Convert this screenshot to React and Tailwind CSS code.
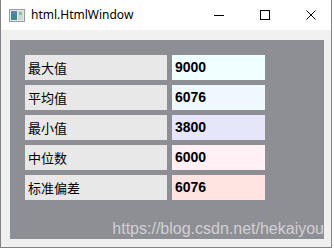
import React from "react";

const rows = [
  { label: "最大值", value: "9000", bg: "bg-[#f0ffff]" },
  { label: "平均值", value: "6076", bg: "bg-[#f0f8ff]" },
  { label: "最小值", value: "3800", bg: "bg-[#e6e6fa]" },
  { label: "中位数", value: "6000", bg: "bg-[#fff0f5]" },
  { label: "标准偏差", value: "6076", bg: "bg-[#ffe4e1]" },
];

const AppIcon = () => (
  <svg width="16" height="13" viewBox="0 0 16 13">
    <rect x="0.5" y="0.5" width="15" height="12" fill="#e8e8e8" stroke="#9a9a9a" />
    <rect x="2" y="2" width="6" height="9" fill="#3d8a8f" />
    <rect x="2" y="2" width="6" height="3" fill="#5f7fb8" />
    <rect x="9" y="2" width="5" height="9" fill="#cfd8d8" />
    <rect x="10" y="3" width="3" height="3" fill="#8fc0a0" />
  </svg>
);

const App = () => (
  <div className="w-[334px] h-[249px] bg-white">
    <div className="w-[332px] h-[248px] border-x border-b border-[#828282] flex flex-col">
      <div className="h-[30px] flex items-center bg-white shrink-0">
        <div className="ml-[8px] mr-[6px] flex items-center">
          <AppIcon />
        </div>
        <span className="text-[12px] text-black font-['Noto_Sans',sans-serif] leading-none">
          html.HtmlWindow
        </span>
        <div className="ml-auto mr-[-3px] flex items-center h-full">
          <div className="w-[46px] h-full flex items-center justify-center">
            <div className="w-[10px] h-px bg-black" />
          </div>
          <div className="w-[46px] h-full flex items-center justify-center">
            <div className="w-[10px] h-[10px] border border-black" />
          </div>
          <div className="w-[46px] h-full flex items-center justify-center">
            <svg width="10" height="10" viewBox="0 0 10 10">
              <path d="M0.5 0.5 L9.5 9.5 M9.5 0.5 L0.5 9.5" stroke="#000" strokeWidth="1" />
            </svg>
          </div>
        </div>
      </div>
      <div className="flex-1 bg-[#f0f0f0] pl-[9px] pt-[10px]">
        <div className="relative w-[314px] h-[199px] bg-[#8e8f94] p-[15px] overflow-hidden">
          <div className="flex flex-col gap-[5px]">
            {rows.map((r) => (
              <div key={r.label} className="flex gap-[5px] h-[25px]">
                <div className="w-[142px] bg-[#e8e8e8] flex items-center pl-[3px] text-[13px] text-black font-['Noto_Sans_CJK_SC',sans-serif]">
                  {r.label}
                </div>
                <div className={`w-[93px] ${r.bg} flex items-center pl-[3px] text-[14px] font-bold text-black font-['Liberation_Sans',sans-serif]`}>
                  {r.value}
                </div>
              </div>
            ))}
          </div>
          <div className="absolute right-0 bottom-[2px] text-[16px] text-[#d8d8dc] opacity-90 font-['Liberation_Sans',sans-serif] leading-none whitespace-nowrap">
            https://blog.csdn.net/hekaiyou
          </div>
        </div>
      </div>
    </div>
  </div>
);

export default App;
